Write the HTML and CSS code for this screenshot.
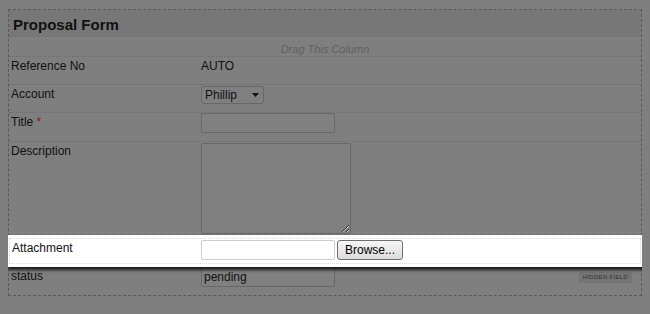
FILE: index.html
```html
<!DOCTYPE html>
<html>
<head>
  <meta charset="utf-8" />
  <title>Proposal Form</title>
  <link rel="stylesheet" href="styles.css">
</head>
<body>
  <div class="form">
    <div class="form-title">Proposal Form</div>
    <div class="drag-hint">Drag This Column</div>

    <div class="row">
      <div class="label">Reference No</div>
      <div class="value value-text">AUTO</div>
    </div>

    <div class="row">
      <div class="label">Account</div>
      <div class="value">
        <span class="select">
          <select><option>Phillip</option></select>
          <svg class="caret" width="7" height="4" viewBox="0 0 7 4"><path d="M0 0h7L3.5 4z" fill="#111"/></svg>
        </span>
      </div>
    </div>

    <div class="row">
      <div class="label">Title <span class="req">*</span></div>
      <div class="value"><input class="input" type="text"></div>
    </div>

    <div class="row row-tall">
      <div class="label">Description</div>
      <div class="value"><textarea class="input textarea"></textarea></div>
    </div>

    <!-- row being dragged -->
    <div class="ghost">
      <div class="row ghost-row">
        <div class="label">Attachment</div>
        <div class="value">
          <span class="file-box"></span>
          <button class="browse">Browse...</button>
        </div>
      </div>
    </div>

    <div class="row row-last">
      <div class="label">status</div>
      <div class="value">
        <input class="input" type="text" value="pending">
        <span class="badge">HIDDEN FIELD</span>
      </div>
    </div>
  </div>
</body>
</html>
```

FILE: styles.css
```css
body {
  margin: 9px 8px 8px;
  background: #7f7f7f;
  font-family: "Liberation Sans", Arial, sans-serif;
  font-size: 12px;
  color: #111;
}

.form {
  border: 1px dashed #595959;
}

.form-title {
  height: 25px;
  padding: 2px 0 0 4px;
  line-height: 25px;
  background: #777;
  font-size: 15px;
  font-weight: bold;
}

.drag-hint {
  height: 16px;
  padding-top: 3px;
  line-height: 18px;
  text-align: center;
  font-size: 11px;
  font-style: italic;
  color: #5f5f5f;
  border-bottom: 1px dotted #6e6e6e;
}

.row {
  display: flex;
  box-sizing: border-box;
  min-height: 28px;
  padding-bottom: 8px;
  border-bottom: 1px dotted #6e6e6e;
}

.row-tall {
  padding-bottom: 0;
}

.row-last {
  border-bottom: none;
}

.label {
  flex: 0 0 190px;
  box-sizing: border-box;
  padding: 1px 0 0 2px;
  line-height: 16px;
}

.req {
  color: #8e1c1c;
}

.value {
  flex: 1;
  display: flex;
  align-items: flex-start;
  padding-left: 2px;
}

.value-text {
  padding-top: 1px;
  line-height: 16px;
}

.input {
  box-sizing: border-box;
  width: 134px;
  height: 20px;
  margin: 0;
  padding: 0 2px;
  border: 1px solid #686868;
  border-radius: 2px;
  background: #808080;
  font: inherit;
  color: #111;
}

.textarea {
  width: 150px;
  height: 91px;
  margin-top: 1px;
}

.select {
  position: relative;
  display: inline-block;
  margin-top: 1px;
}

.select select {
  appearance: none;
  -webkit-appearance: none;
  box-sizing: border-box;
  width: 63px;
  height: 18px;
  margin: 0;
  padding: 0 0 0 3px;
  border: 1px solid #686868;
  border-radius: 3px;
  background: #808080;
  font: inherit;
  color: #111;
}

.caret {
  position: absolute;
  right: 5px;
  top: 7px;
}

.ghost {
  position: relative;
  margin: 0 -3px;
  padding: 3px;
  background: #fff;
  box-shadow: 2px 3px 3px rgba(0, 0, 0, 0.8);
}

.ghost-row {
  min-height: 0;
  padding-bottom: 3px;
  border: 1px dotted #d9d9d9;
}

.ghost-row .label {
  flex-basis: 189px;
}

.ghost-row .value {
  padding-top: 1px;
}

.file-box {
  box-sizing: border-box;
  width: 134px;
  height: 20px;
  border: 1px solid #c9ccd3;
  border-radius: 2px;
  background: #fff;
}

.browse {
  box-sizing: border-box;
  width: 66px;
  height: 20px;
  margin: 0 0 0 2px;
  padding: 0;
  border: 1px solid #707070;
  border-radius: 3px;
  background: linear-gradient(#f6f6f6, #dcdcdc);
  font: inherit;
  color: #000;
}

.badge {
  margin: 5px 9px 0 auto;
  padding: 2px 4px;
  line-height: 7px;
  background: #747474;
  font-size: 6px;
  letter-spacing: 0.3px;
  color: #333;
}
```
